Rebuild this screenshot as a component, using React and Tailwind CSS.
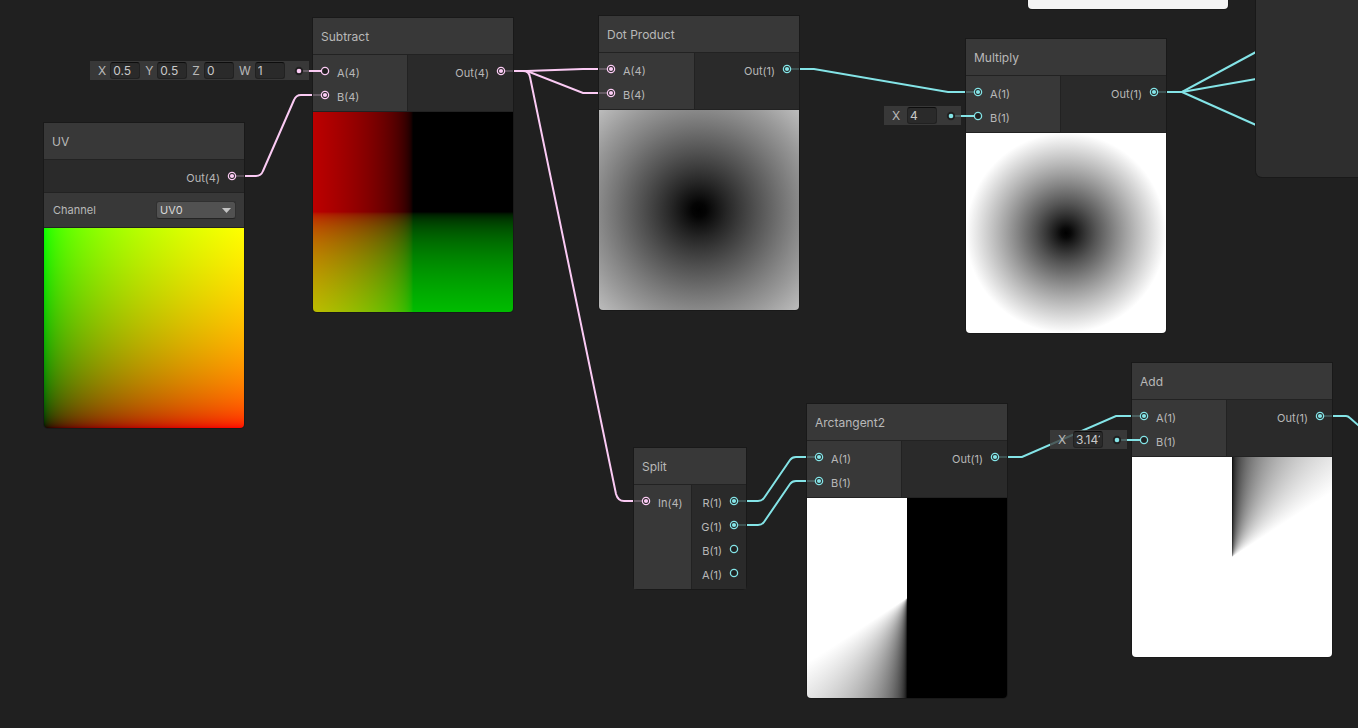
import React from 'react';

const PINK = { stroke: '#fbcbf4', fill: 'bg-[#fbcbf4]' };
const CYAN = { stroke: '#84e4e7', fill: 'bg-[#84e4e7]' };

const EDGES = [
    { color: PINK, d: 'M232 176H256Q261 176 263 171L294 100Q296 95 301 95H325' },
    { color: PINK, d: 'M501 71H527L583 69H611' },
    { color: PINK, d: 'M501 71H527L583 93H611' },
    { color: PINK, d: 'M501 71H523Q529 71 530 77L616 494Q618 501 624 501H646' },
    { color: PINK, d: 'M298 71H325' },
    { color: CYAN, d: 'M787 69H814L948 92H978' },
    { color: CYAN, d: 'M951 116H978' },
    { color: CYAN, d: 'M1154 92H1182L1256 52' },
    { color: CYAN, d: 'M1182 92L1256 79' },
    { color: CYAN, d: 'M1182 92L1256 125' },
    { color: CYAN, d: 'M734 501H758Q762 501 764 498L790 460Q792 457 796 457H819' },
    { color: CYAN, d: 'M734 525H758Q762 525 764 522L790 484Q792 481 796 481H819' },
    { color: CYAN, d: 'M995 457H1022L1116 416H1144' },
    { color: CYAN, d: 'M1117 440H1144' },
    { color: CYAN, d: 'M1320 416H1346Q1348 416 1350 418L1366 432' },
];

const Edges = () => (
    <svg className="absolute inset-0 w-full h-full pointer-events-none" fill="none" strokeWidth="2" aria-hidden="true">
        {EDGES.map(({ color, d }) => <path key={d} d={d} stroke={color.stroke} />)}
    </svg>
);

// state: "linked" shows the inner dot, "default" takes its value from a field, "open" has nothing attached
const Port = ({ label, color, state = 'linked', out = false }) => (
    <li className={`relative flex items-center h-6 gap-[7px] px-[7px] ${out ? 'flex-row-reverse' : ''}`}>
        {state === 'default' && <span className={`absolute -left-1 top-[11px] w-3 h-0.5 ${color.fill}`} />}
        <svg className="relative size-2.5 shrink-0" viewBox="0 0 10 10" aria-hidden="true">
            <circle cx="5" cy="5" r="3.6" fill="#202020" stroke={color.stroke} strokeWidth="1.3" />
            {state === 'linked' && <circle cx="5" cy="5" r="2.1" fill={color.stroke} />}
        </svg>
        <span className="pt-1">{label}</span>
    </li>
);

const Node = ({ title, at, width = 'w-[200px]', split = 'w-[95px]', inputs, outputs, controls, preview }) => (
    <section className={`absolute rounded-b-sm shadow-[0_0_0_1px_#191919] ${width} ${at}`}>
        <h2 className="h-9 flex items-center px-2 pt-px text-[12px] bg-[#3f3f3f]/80">{title}</h2>
        <div className="flex border-t border-[#222222]">
            {inputs && (
                <ul className={`py-1 shrink-0 bg-[#3f3f3f]/80 border-r border-[#222222] ${split}`}>
                    {inputs.map((p) => <Port key={p.label} {...p} />)}
                </ul>
            )}
            <ul className="flex-1 py-1 bg-[#2d2d2d]/80">
                {outputs.map((p) => <Port key={p.label} out {...p} />)}
            </ul>
        </div>
        {controls}
        {preview && (
            <div className="border-t border-[#222222]">
                <div role="img" aria-label={`${title} preview`} className={`aspect-square rounded-b-sm ${preview}`} />
            </div>
        )}
    </section>
);

const ValueFields = ({ name, at, color, fields }) => (
    <div className={`absolute flex items-center h-[19px] pl-2 pr-[5px] text-[12px] bg-[#3f3f3f]/80 ${at}`}>
        <div className="flex items-center gap-[5px]">
            {fields.map(([axis, value]) => (
                <label key={axis} className="flex items-center gap-1">
                    <span className={fields.length === 1 ? 'min-w-[11px]' : ''}>{axis}</span>
                    <input
                        type="text"
                        aria-label={`${name} ${axis}`}
                        defaultValue={value}
                        className="w-[30px] h-[17px] px-0.5 rounded-[3px] border border-[#212121] border-t-[#0d0d0d] bg-[#2a2a2a] text-[#c8c8c8] outline-none focus:border-[#3a79bb]" />
                </label>
            ))}
        </div>
        <svg className="ml-[9px] size-2.5 shrink-0" viewBox="0 0 10 10" aria-hidden="true">
            <circle cx="5" cy="5" r="4.2" fill="#202020" />
            <circle cx="5" cy="5" r="2.3" fill={color.stroke} />
        </svg>
    </div>
);

const ChannelControl = () => (
    <div className="flex items-center justify-between h-[35px] pl-[9px] pr-2 border-t border-[#222222] bg-[#3f3f3f]/80">
        <label htmlFor="uv-channel">Channel</label>
        <div className="relative">
            <select
                id="uv-channel"
                defaultValue="UV0"
                className="block appearance-none w-20 h-[18px] pl-[3px] rounded-[3px] border border-[#303030] border-b-[#242424] bg-[#515151] text-[#d8d8d8] outline-none">
                <option>UV0</option>
                <option>UV1</option>
                <option>UV2</option>
                <option>UV3</option>
            </select>
            <svg className="absolute right-[5px] top-[7px] w-[9px] h-[5px] pointer-events-none" viewBox="0 0 9 5" aria-hidden="true">
                <path d="M0 0H9L4.5 5Z" fill="#c4c4c4" />
            </svg>
        </div>
    </div>
);

const App = () => (
    <main className="relative min-h-screen overflow-hidden bg-[#202020] font-[Inter,sans-serif] text-[11px] leading-4 text-[#b8b8b8]">
        <Edges />

        {/* Neighbouring nodes that run past the viewport */}
        <div className="absolute left-[1028px] top-0 w-[200px] h-[9px] rounded-b-sm bg-[#f3f3f3] shadow-[0_0_0_1px_#191919]" />
        <div className="absolute left-[1256px] -top-2 -right-2 h-[185px] rounded-md bg-[#2e2e2e] shadow-[0_0_0_1px_#191919]" />

        <Node
            title="UV"
            at="left-[44px] top-[123px]"
            outputs={[{ label: 'Out(4)', color: PINK }]}
            controls={<ChannelControl />}
            preview="bg-[linear-gradient(in_srgb-linear_to_right,#000,#f00),linear-gradient(in_srgb-linear_to_top,#000,#0f0)] bg-blend-screen" />

        <Node
            title="Subtract"
            at="left-[313px] top-[18px]"
            inputs={[{ label: 'A(4)', color: PINK, state: 'default' }, { label: 'B(4)', color: PINK }]}
            outputs={[{ label: 'Out(4)', color: PINK }]}
            preview="bg-[linear-gradient(in_srgb-linear_to_right,#bc0000,#000_50%),linear-gradient(in_srgb-linear_to_top,#00bc00,#000_50%)] bg-blend-screen" />
        <ValueFields
            name="Subtract A"
            at="left-[90px] top-[61px]"
            color={PINK}
            fields={[['X', '0.5'], ['Y', '0.5'], ['Z', '0'], ['W', '1']]} />

        <Node
            title="Dot Product"
            at="left-[599px] top-[16px]"
            split="w-24"
            inputs={[{ label: 'A(4)', color: PINK }, { label: 'B(4)', color: PINK }]}
            outputs={[{ label: 'Out(1)', color: CYAN }]}
            preview="bg-[radial-gradient(circle_farthest-corner,#000,#040404_5%,#101010_10%,#272727_20%,#3c3c3c_30%,#505050_40%,#636363_50%,#767676_60%,#888888_70%,#999999_80%,#ababab_90%,#bcbcbc)]" />

        <Node
            title="Multiply"
            at="left-[966px] top-[39px]"
            inputs={[{ label: 'A(1)', color: CYAN }, { label: 'B(1)', color: CYAN, state: 'default' }]}
            outputs={[{ label: 'Out(1)', color: CYAN }]}
            preview="bg-[radial-gradient(circle_closest-side,#000,#080808_5%,#191919_10%,#383838_20%,#555555_30%,#6f6f6f_40%,#898989_50%,#a2a2a2_60%,#bababa_70%,#d1d1d1_80%,#e8e8e8_90%,#fff)]" />
        <ValueFields name="Multiply B" at="left-[884px] top-[106px]" color={CYAN} fields={[['X', '4']]} />

        <Node
            title="Split"
            at="left-[634px] top-[448px]"
            width="w-28"
            split="w-[58px]"
            inputs={[{ label: 'In(4)', color: PINK }]}
            outputs={[
                { label: 'R(1)', color: CYAN },
                { label: 'G(1)', color: CYAN },
                { label: 'B(1)', color: CYAN, state: 'open' },
                { label: 'A(1)', color: CYAN, state: 'open' },
            ]} />

        <Node
            title="Arctangent2"
            at="left-[807px] top-[404px]"
            inputs={[{ label: 'A(1)', color: CYAN }, { label: 'B(1)', color: CYAN }]}
            outputs={[{ label: 'Out(1)', color: CYAN }]}
            preview="bg-[conic-gradient(from_180deg_in_srgb-linear,#000,#fff_57deg,#fff_180deg,#000_180deg)]" />

        <Node
            title="Add"
            at="left-[1132px] top-[363px]"
            inputs={[{ label: 'A(1)', color: CYAN }, { label: 'B(1)', color: CYAN, state: 'default' }]}
            outputs={[{ label: 'Out(1)', color: CYAN }]}
            preview="bg-[conic-gradient(in_srgb-linear,#000,#fff_57deg)]" />
        <ValueFields name="Add B" at="left-[1050px] top-[430px]" color={CYAN} fields={[['X', '3.14159']]} />
    </main>
);

export default App;
